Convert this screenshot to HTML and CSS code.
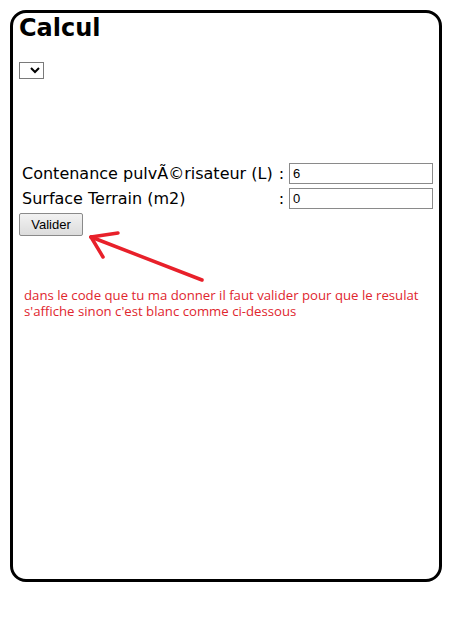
FILE: index.html
```html
<!DOCTYPE html>
<html lang="fr">
<head>
    <meta charset="UTF-8">
    <meta name="viewport" content="width=device-width, initial-scale=1.0">
    <title>Calcul</title>
    <link rel="stylesheet" href="styles.css">
</head>
<body>
    <div class="frame">
        <h1>Calcul</h1>
        <select class="choix"></select>

        <table class="calc">
            <tr>
                <td class="lbl">Contenance pulvÃ©risateur (L)</td>
                <td class="sep">:</td>
                <td><input type="text" value="6"></td>
            </tr>
            <tr>
                <td class="lbl">Surface Terrain (m2)</td>
                <td class="sep">:</td>
                <td><input type="text" value="0"></td>
            </tr>
        </table>
        <button class="valider">Valider</button>

        <p class="note">dans le code que tu ma donner il faut valider pour que le resulat s'affiche sinon c'est blanc comme ci-dessous</p>

        <!-- red arrow pointing at the button -->
        <svg class="arrow" width="455" height="622" viewBox="0 0 455 622">
            <g stroke="#e8202a" stroke-width="3.5" stroke-linecap="round" fill="none">
                <line x1="202" y1="280" x2="91" y2="237"/>
                <line x1="91" y1="237" x2="118" y2="233"/>
                <line x1="91" y1="237" x2="103" y2="257"/>
            </g>
        </svg>
    </div>
</body>
</html>
```

FILE: styles.css
```css
body {
    margin: 0;
    background: #fff;
    font-family: "DejaVu Sans", Verdana, sans-serif;
}
.frame {
    box-sizing: border-box;
    width: 432px;
    height: 572px;
    margin: 10px;
    border: 3px solid #000;
    border-radius: 16px;
    padding: 0 6px;
}
h1 {
    margin: 0;
    padding-top: 1px;
    font-size: 24px;
    line-height: 28px;
    font-weight: bold;
    color: #000;
}
.choix {
    display: block;
    margin-top: 20px;
    width: 25px;
    height: 17px;
    border: 1px solid #7a7a7a;
    background: #fff;
    font-size: 12px;
}
.calc {
    margin-top: 82px;
    border-collapse: collapse;
    font-size: 16px;
    color: #000;
}
.calc td {
    padding: 0;
    height: 25px;
    white-space: nowrap;
}
.lbl {
    padding-left: 3px !important;
}
.sep {
    padding: 0 5px 0 6px !important;
}
.calc input {
    box-sizing: border-box;
    width: 144px;
    height: 21px;
    border: 1px solid #8a8a8a;
    padding: 0 3px;
    font-family: "Liberation Sans", Arial, sans-serif;
    font-size: 13px;
}
.valider {
    display: block;
    width: 64px;
    height: 23px;
    margin-top: 2px;
    border: 1px solid #8a8a8a;
    border-radius: 2px;
    background: linear-gradient(#f2f2f2, #dcdcdc);
    font-family: "Liberation Sans", Arial, sans-serif;
    font-size: 13px;
    color: #000;
}
.note {
    margin: 51px 0 0 5px;
    font-family: "Open Sans", sans-serif;
    font-size: 13.2px;
    line-height: 16px;
    color: #e0262e;
}
.arrow {
    position: absolute;
    left: 0;
    top: 0;
    pointer-events: none;
}
```
